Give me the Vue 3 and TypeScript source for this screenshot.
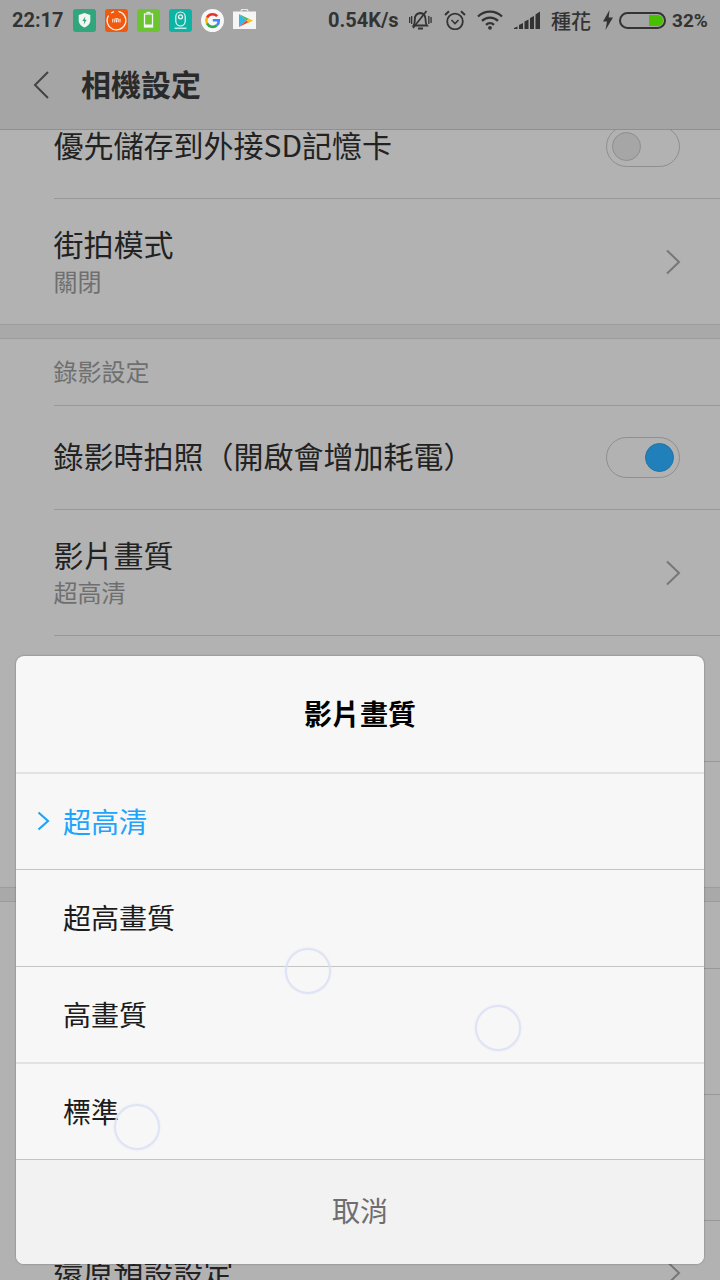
<template>
  <div class="screen">
    <header class="top">
      <div class="status">
        <span class="clock">22:17</span>
        <div class="apps">
          <svg class="app" viewBox="0 0 23 23">
            <rect width="23" height="23" rx="3" fill="#2fa67c" />
            <path d="M11.500 4l5.800 2.100v5.200c0 3.500-2.500 5.900-5.800 7.200-3.300-1.300-5.800-3.700-5.800-7.200V6.100z" fill="#f4f4f4" />
            <path d="M12.300 7.500l-3 4.500h2l-.6 3.500 3-4.700h-2z" fill="#2fa67c" />
          </svg>
          <svg class="app" viewBox="0 0 23 23">
            <rect width="23" height="23" rx="3" fill="#f15a0c" />
            <path d="M13.500 2.300A9.400 9.400 0 1 1 3.500 6.500" fill="none" stroke="#f6f6f6" stroke-width="1.200" />
            <path d="M6 4l3-1.400" fill="none" stroke="#f6f6f6" stroke-width="1.200" />
            <path d="M7.800 9.800v3.600M9.800 13.400V9.800h3.400v3.600M11.500 10.500v2.900M15 9.800v3.600" fill="none" stroke="#f6f6f6" stroke-width="1" />
          </svg>
          <svg class="app" viewBox="0 0 23 23">
            <rect width="23" height="23" rx="3" fill="#6bc432" />
            <rect x="7.500" y="5" width="8" height="13" fill="none" stroke="#f6f6f6" stroke-width="1.300" />
            <path d="M9.500 3.500h4" stroke="#f6f6f6" stroke-width="1.300" />
            <rect x="8" y="15.500" width="7" height="2.500" fill="#f6f6f6" />
          </svg>
          <svg class="app" viewBox="0 0 23 23">
            <rect width="23" height="23" rx="3" fill="#0cb4a4" />
            <rect x="6.800" y="3" width="9.400" height="14" rx="4.700" fill="none" stroke="#f4f4f4" stroke-width="1.200" />
            <circle cx="11.500" cy="7.800" r="2" fill="none" stroke="#f4f4f4" stroke-width="1.200" />
            <path d="M5.500 19.200h12" stroke="#f4f4f4" stroke-width="1.200" />
          </svg>
          <svg class="app" viewBox="0 0 23 23">
            <circle cx="11.500" cy="11.500" r="11.500" fill="#f7f7f7" />
            <path d="M16.200 7.200a6.400 6.400 0 0 0-4.600-1.900 6.300 6.300 0 0 0-5.600 3.400" fill="none" stroke="#e5352b" stroke-width="2.600" />
            <path d="M6 8.700a6.300 6.300 0 0 0 0 5.700" fill="none" stroke="#f5b400" stroke-width="2.600" />
            <path d="M6 14.400a6.300 6.300 0 0 0 9.800 1.800" fill="none" stroke="#2fa84f" stroke-width="2.600" />
            <path d="M15.800 16.200a6 6 0 0 0 2-4.900h-6" fill="none" stroke="#4285f4" stroke-width="2.600" />
          </svg>
          <svg class="app" viewBox="0 0 23 23">
            <path d="M0 2.500h23V20H0z" fill="#f5f5f5" />
            <path d="M8 2.500c0-3.300 7-3.300 7 0" fill="none" stroke="#ececec" stroke-width="1.200" />
            <path d="M6 5l7.500 6.500L6 18z" fill="#35b8e8" />
            <path d="M6 5l10 5-2.500 1.500z" fill="#3cba6b" />
            <path d="M6 18l10-5-2.500-1.500z" fill="#e8443a" />
            <path d="M15.500 9.500L20 11.500l-4.500 2.500-2-2.500z" fill="#f9c21a" />
          </svg>
        </div>
        <div class="indicators">
          <span class="speed">0.54K/s</span>
          <svg class="ic bell" viewBox="0 0 23 20">
            <path d="M4.500 15.500c1.300-1.500 1.300-3 1.300-6 0-3.500 2.200-6 5.200-6.500 3.400.2 5.500 2.800 5.500 6.300 0 3 .2 4.700 1.500 6.200z" fill="none" stroke="#333" stroke-width="1.800" />
            <path d="M9 18.500h5" stroke="#333" stroke-width="2" />
            <path d="M4 18L17.500 1" stroke="#333" stroke-width="1.800" />
            <path d="M0 7h1.300v6H0zM2 6h1.300v8H2zM19.200 6h1.300v8h-1.300zM21.400 7h1.300v6h-1.300z" fill="#333" />
          </svg>
          <svg class="ic alarm" viewBox="0 0 22 20">
            <circle cx="11" cy="11.500" r="7.800" fill="none" stroke="#333" stroke-width="1.800" />
            <path d="M7.500 10l3.500 3.500 3.500-3.500" fill="none" stroke="#333" stroke-width="1.600" />
            <path d="M1 5l4-3.800M21 5l-4-3.800" stroke="#333" stroke-width="2" />
          </svg>
          <svg class="ic wifi" viewBox="0 0 26 20">
            <path d="M1 6.500a17 17 0 0 1 24 0" fill="none" stroke="#333" stroke-width="2.300" />
            <path d="M5 10.800a11.500 11.500 0 0 1 16 0" fill="none" stroke="#333" stroke-width="2.300" />
            <path d="M9 14.800a6 6 0 0 1 8 0" fill="none" stroke="#333" stroke-width="2.300" />
            <circle cx="13" cy="17.800" r="1.900" fill="#333" />
          </svg>
          <svg class="ic signal" viewBox="0 0 26 20">
            <path d="M0 19h3.500v-2.500L0 18zM5 19h4v-6L5 15zM10.500 19h4V9.500l-4 2zM16 19h4V6l-4 2zM21.500 19H26V1.500l-4.500 3z" fill="#333" />
          </svg>
          <span class="carrier">種花</span>
          <svg class="ic bolt" viewBox="0 0 10 20">
            <path d="M6.500 0L0 11.500h4L2.500 20 10 7.500H5.700z" fill="#333" />
          </svg>
          <div class="battery"><div class="charge"></div></div>
          <span class="percent">32%</span>
        </div>
      </div>
      <div class="bar">
        <svg class="back" viewBox="0 0 18 30">
          <path d="M16 2L3 15l13 13" fill="none" stroke="#444" stroke-width="2" />
        </svg>
        <h1>相機設定</h1>
      </div>
    </header>

    <div class="list">
      <div class="scroller">
        <template v-for="row in rows" :key="row.id">
          <div v-if="row.kind === 'band'" class="band"></div>
          <div v-else-if="row.kind === 'section'" class="section">{{ row.title }}</div>
          <div v-else class="row" :class="{ tall: row.tall }">
            <div class="row-text">
              <div class="title">{{ row.title }}</div>
              <div v-if="row.sub" class="sub">{{ row.sub }}</div>
            </div>
            <div v-if="row.kind === 'toggle'" class="switch" :class="{ on: row.on }">
              <div class="knob"></div>
            </div>
            <svg v-if="row.kind === 'link'" class="chev" viewBox="0 0 16 26">
              <path d="M2 1.500L14 13 2 24.500" fill="none" stroke="#777" stroke-width="2" />
            </svg>
          </div>
        </template>
      </div>
    </div>

    <div class="dialog">
      <div class="dialog-title">影片畫質</div>
      <div
        v-for="(opt, i) in options"
        :key="opt"
        class="option"
        :class="{ picked: i === 0 }"
      >
        <svg v-if="i === 0" class="tick" viewBox="0 0 13 20">
          <path d="M1.500 1.500L11 10l-9.500 8.500" fill="none" stroke="#1ea4fb" stroke-width="2.200" />
        </svg>
        {{ opt }}
      </div>
      <div class="cancel">取消</div>
    </div>

    <i class="touch" style="left: 285px; top: 948px"></i>
    <i class="touch" style="left: 475px; top: 1005px"></i>
    <i class="touch" style="left: 114px; top: 1104px"></i>
  </div>
</template>

<script setup lang="ts">
interface Row {
  id: number;
  kind: 'toggle' | 'link' | 'band' | 'section' | 'blank';
  title?: string;
  sub?: string;
  on?: boolean;
  tall?: boolean;
}

const rows: Row[] = [
  { id: 1, kind: 'toggle', title: '優先儲存到外接SD記憶卡' },
  { id: 2, kind: 'link', title: '街拍模式', sub: '關閉', tall: true },
  { id: 3, kind: 'band' },
  { id: 4, kind: 'section', title: '錄影設定' },
  { id: 5, kind: 'toggle', title: '錄影時拍照（開啟會增加耗電）', on: true },
  { id: 6, kind: 'link', title: '影片畫質', sub: '超高清', tall: true },
  { id: 7, kind: 'blank', tall: true },
  { id: 8, kind: 'blank', tall: true },
  { id: 9, kind: 'band' },
  { id: 10, kind: 'section' },
  { id: 11, kind: 'blank', tall: true },
  { id: 12, kind: 'blank', tall: true },
  { id: 13, kind: 'link', title: '還原預設設定' }
];

const options = ['超高清', '超高畫質', '高畫質', '標準'];
</script>

<style>
body {
  background: #b2b2b2;
}
</style>

<style scoped>
.screen {
  position: relative;
  width: 720px;
  height: 1280px;
  overflow: hidden;
  background: #b2b2b2;
  font-family: "Noto Sans CJK TC", "Noto Sans", sans-serif;
  color: #222;
}

.top {
  height: 129px;
  background: #a5a5a5;
  border-bottom: 1px solid #8f8f8f;
  box-sizing: content-box;
}

.status {
  display: flex;
  align-items: center;
  height: 40px;
  padding: 0 12px;
  color: #333;
  font-family: Roboto, sans-serif;
  font-weight: 700;
  font-size: 20px;
}

.clock {
  width: 61px;
}

.apps {
  display: flex;
  gap: 9px;
}

.app {
  width: 23px;
  height: 23px;
  display: block;
}

.indicators {
  display: flex;
  align-items: center;
  margin-left: auto;
}

.speed {
  width: 81px;
}

.ic {
  display: block;
}

.bell {
  width: 23px;
  height: 20px;
  margin-right: 12px;
}

.alarm {
  width: 22px;
  height: 20px;
  margin-right: 11px;
}

.wifi {
  width: 26px;
  height: 20px;
  margin-right: 11px;
}

.signal {
  width: 26px;
  height: 20px;
  margin-right: 11px;
}

.carrier {
  font-family: "Noto Sans CJK TC", sans-serif;
  font-weight: 500;
  width: 52px;
}

.bolt {
  width: 10px;
  height: 20px;
  margin-right: 6px;
}

.battery {
  width: 47px;
  height: 17px;
  box-sizing: border-box;
  border: 2px solid #333;
  border-radius: 9px;
  display: flex;
  justify-content: flex-end;
  align-items: center;
  padding-right: 1px;
  margin-right: 6px;
}

.charge {
  width: 14px;
  height: 11px;
  background: #48c000;
  border-radius: 0 6px 6px 0;
}

.percent {
  width: 36px;
  font-size: 19px;
}

.bar {
  display: flex;
  align-items: center;
  height: 89px;
  padding-left: 32px;
}

.back {
  width: 18px;
  height: 30px;
  margin-right: 31px;
}

h1 {
  margin: 0 0 4px;
  font-size: 30px;
  font-weight: 700;
  line-height: 42px;
  color: #2a2a2a;
}

.list {
  height: 1150px;
  overflow: hidden;
}

.scroller {
  margin-top: -35px;
}

.row {
  display: flex;
  align-items: center;
  justify-content: space-between;
  height: 104px;
  margin-left: 54px;
  padding-right: 40px;
  border-bottom: 1px solid #979797;
  box-sizing: border-box;
}

.row.tall {
  height: 126px;
}

.row-text {
  margin-left: -0.5px;
  padding-bottom: 6px;
}

.tall .row-text {
  padding-bottom: 3px;
}

.title {
  font-size: 30px;
  line-height: 42px;
  color: #222;
}

.sub {
  font-size: 24px;
  line-height: 34px;
  color: #6f6f6f;
}

.band {
  height: 15px;
  background: #a9a9a9;
  margin-top: -1px;
  border-top: 1px solid #9c9c9c;
  border-bottom: 1px solid #9c9c9c;
  box-sizing: border-box;
}

.section {
  height: 67px;
  margin-left: 54px;
  border-bottom: 1px solid #979797;
  box-sizing: border-box;
  font-size: 24px;
  line-height: 64px;
  text-indent: -0.5px;
  color: #6f6f6f;
}

.switch {
  width: 74px;
  height: 41px;
  box-sizing: border-box;
  border: 1px solid #8e8e8e;
  border-radius: 21px;
  display: flex;
  align-items: center;
  padding: 0 5px;
}

.switch.on {
  justify-content: flex-end;
}

.knob {
  width: 29px;
  height: 29px;
  border-radius: 50%;
  background: #a6a6a6;
  border: 1px solid #8e8e8e;
  box-sizing: border-box;
}

.on .knob {
  background: #2180b9;
  border-color: #1e74a8;
}

.chev {
  width: 16px;
  height: 26px;
  margin-right: -1px;
}

.dialog {
  position: absolute;
  left: 16px;
  top: 656px;
  width: 688px;
  height: 608px;
  border-radius: 8px;
  overflow: hidden;
  background: #f7f7f7;
  box-shadow: 0 0 2px rgba(0, 0, 0, 0.4);
  display: flex;
  flex-direction: column;
}

.dialog-title {
  height: 116px;
  flex: none;
  text-align: center;
  font-size: 28px;
  font-weight: 700;
  line-height: 114px;
  color: #000;
  border-bottom: 2px solid #e2e2e2;
}

.option {
  position: relative;
  height: 96px;
  flex: none;
  padding-left: 47px;
  font-size: 28px;
  line-height: 94px;
  color: #1c1c1c;
  border-bottom: 1px solid #c4c4c4;
  box-sizing: content-box;
}

/* 第一列少一像素，分隔線才會落在 869 */
.option:nth-child(2) {
  height: 95px;
}

/* 第三列的分隔線比較粗比較淡 */
.option:nth-child(4) {
  height: 95px;
  border-bottom: 2px solid #e2e2e2;
}

.option:nth-child(5) {
  height: 95px;
}

.picked {
  color: #1ea4fb;
}

.tick {
  position: absolute;
  left: 21px;
  top: 37px;
  width: 13px;
  height: 20px;
}

.cancel {
  flex: 1;
  background: #f2f2f2;
  text-align: center;
  font-size: 28px;
  line-height: 100px;
  color: #6e6e6e;
}

.touch {
  position: absolute;
  width: 46px;
  height: 46px;
  box-sizing: border-box;
  border-radius: 50%;
  border: 2px solid rgba(220, 224, 244, 0.9);
  box-shadow: 0 0 2px rgba(220, 224, 244, 0.7);
}
</style>
